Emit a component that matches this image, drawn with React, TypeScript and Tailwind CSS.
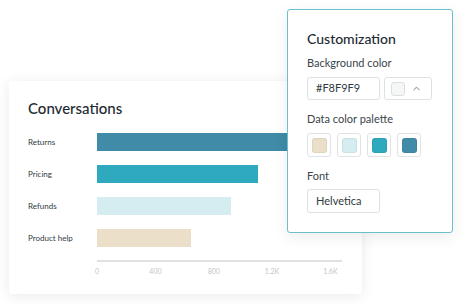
import { ChevronUp } from "lucide-react";

const bars = [
  { label: "Returns", width: 245, color: "bg-[#3f8ba8]" },
  { label: "Pricing", width: 161, color: "bg-[#2fa9bd]" },
  { label: "Refunds", width: 134, color: "bg-[#d5ecf0]" },
  { label: "Product help", width: 94, color: "bg-[#ebdfca]" },
];

const ticks = ["0", "400", "800", "1.2K", "1.6K"];

const palette = ["bg-[#ebdfca]", "bg-[#d5ecf0]", "bg-[#2fa9bd]", "bg-[#3f8ba8]"];

function ChartCard() {
  return (
    <div className="ml-[9px] mt-[80px] h-[213px] w-[353px] rounded-[3px] bg-white pl-[19px] pt-[17px] shadow-[0_2px_14px_rgba(0,0,0,0.09)]">
      <h3 className="text-[15px] font-medium leading-[20px] text-[#1d2a31]">Conversations</h3>
      <div className="mt-[15px] flex flex-col gap-[14px]">
        {bars.map((bar) => (
          <div key={bar.label} className="flex h-[18px] items-center">
            <span className="w-[69px] text-[8px] text-[#2f3a40]">{bar.label}</span>
            <div className={`h-[18px] ${bar.color}`} style={{ width: bar.width }} />
          </div>
        ))}
      </div>
      <div className="ml-[69px] mt-[13px] h-[1.5px] w-[245px] bg-[#dfe2e4]" />
      <div className="ml-[40px] mt-[4px] flex">
        {ticks.map((t) => (
          <span key={t} className="flex w-[58.3px] justify-center text-[7px] leading-[10px] text-[#c2c6c9]">
            {t}
          </span>
        ))}
      </div>
    </div>
  );
}

function Panel() {
  return (
    <div className="absolute left-[287px] top-[9px] h-[224px] w-[166px] rounded-[3px] border border-[#6cc0cb] bg-white pl-[19px] pt-[20px] shadow-[0_4px_16px_rgba(0,0,0,0.08)]">
      <h4 className="text-[14px] font-medium leading-[18px] text-[#1d2a31]">Customization</h4>
      <p className="mt-[8px] text-[11px] leading-[14px] text-[#3a454b]">Background color</p>
      <div className="mt-[7px] flex gap-[4px]">
        <div className="flex h-[23px] w-[73px] items-center rounded-[3px] border border-[#dde1e3] pl-[8px] text-[11px] text-[#2f3a40]">
          #F8F9F9
        </div>
        <div className="flex h-[23px] w-[48px] items-center gap-[6px] rounded-[3px] border border-[#dde1e3] pl-[6px]">
          <div className="h-[14px] w-[14px] rounded-[3px] border border-[#dcdfe0] bg-[#f5f6f6]" />
          <ChevronUp className="h-[11px] w-[11px] text-[#6b757a]" strokeWidth={2} />
        </div>
      </div>
      <p className="mt-[12px] text-[11px] leading-[14px] text-[#3a454b]">Data color palette</p>
      <div className="mt-[7px] flex gap-[6px]">
        {palette.map((c) => (
          <div key={c} className="flex h-[24px] w-[24px] items-center justify-center rounded-[3px] border border-[#e0e3e4]">
            <div className={`h-[15px] w-[15px] rounded-[3px] border border-black/5 ${c}`} />
          </div>
        ))}
      </div>
      <p className="mt-[12px] text-[11px] leading-[14px] text-[#3a454b]">Font</p>
      <div className="mt-[6px] flex h-[24px] w-[73px] items-center rounded-[3px] border border-[#dde1e3] pl-[8px] text-[11px] text-[#2f3a40]">
        Helvetica
      </div>
    </div>
  );
}

export default function App() {
  return (
    <div className="relative h-[305px] w-[474px] overflow-hidden bg-white pt-px font-['Lato',sans-serif]">
      <ChartCard />
      <Panel />
    </div>
  );
}
